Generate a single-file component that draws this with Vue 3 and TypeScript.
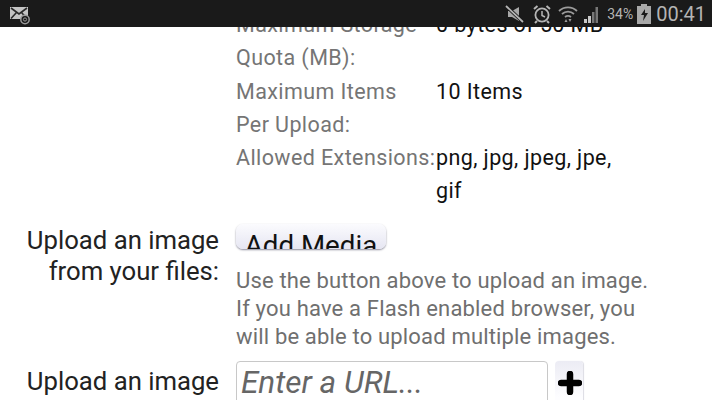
<script setup lang="ts">
const stats: { label: string[]; value: string[] }[] = [
  { label: ['Maximum Storage', 'Quota (MB):'], value: ['0 bytes of 50 MB'] },
  { label: ['Maximum Items', 'Per Upload:'], value: ['10 Items'] },
  { label: ['Allowed Extensions:'], value: ['png, jpg, jpeg, jpe,', 'gif'] },
]
const help = [
  'Use the button above to upload an image.',
  'If you have a Flash enabled browser, you',
  'will be able to upload multiple images.',
]
</script>

<template>
  <div class="screen">
    <header class="status">
      <svg class="mail" width="20" height="18" viewBox="0 0 20 18">
        <rect x="0" y="0" width="18" height="12" fill="#c4c4c4" />
        <path d="M1 1l8 6 8-6M1 11.500l5.500-6M17 11.500l-5.500-6" fill="none" stroke="#2a2a2a" stroke-width="1.6" />
        <circle cx="15" cy="12.500" r="4.200" fill="#1a1a1a" stroke="#999" stroke-width="1.500" />
        <circle cx="15" cy="12.500" r="1.600" fill="none" stroke="#999" stroke-width="1" />
      </svg>
      <div class="tray">
        <svg class="i-mute" width="20" height="18" viewBox="0 0 20 18">
          <path d="M3 6h4l7-4v14l-7-4H3z" fill="#a8a8a8" />
          <path d="M1 1l17 16" stroke="#1a1a1a" stroke-width="3.400" />
          <path d="M1 1l17 16" stroke="#b5b5b5" stroke-width="1.800" />
        </svg>
        <svg class="i-alarm" width="20" height="20" viewBox="0 0 20 20">
          <circle cx="10" cy="11" r="6.600" fill="none" stroke="#b5b5b5" stroke-width="1.800" />
          <path d="M10 7v4.500l3 1.500" fill="none" stroke="#b5b5b5" stroke-width="1.500" />
          <path d="M2 5l3.500-3M18 5l-3.500-3M5 17l-2 2M15 17l2 2" stroke="#b5b5b5" stroke-width="2" />
        </svg>
        <svg class="i-wifi" width="20" height="20" viewBox="0 0 20 20">
          <path d="M1 7a13 13 0 0 1 18 0M4 10a9 9 0 0 1 12 0M7 13a5 5 0 0 1 6 0" fill="none" stroke="#9c9c9c" stroke-width="1.800" />
          <path d="M8 15l-1.500 3h3zM12 18l1.500-3h-3z" fill="#9c9c9c" />
        </svg>
        <svg class="i-signal" width="18" height="18" viewBox="0 0 16 18">
          <path d="M1 14h3v4H1zM5 11h3v7H5z" fill="#c8c8c8" />
          <path d="M9 7h2.500v11H9zM12.500 2H15v16h-2.500z" fill="#777" />
        </svg>
        <span class="percent">34%</span>
        <svg class="i-batt" width="14" height="20" viewBox="0 0 14 20">
          <path d="M4 0h6v2h4v18H0V2h4z" fill="#a8a8a8" />
          <path d="M8 5L4 11h3l-1 6 5-8H8z" fill="#1a1a1a" />
        </svg>
        <span class="clock">00:41</span>
      </div>
    </header>

    <main class="page">
      <section class="stats">
        <template v-for="row in stats" :key="row.label[0]">
          <div class="stat-label">
            <div v-for="line in row.label" :key="line">{{ line }}</div>
          </div>
          <div class="stat-value">
            <div v-for="line in row.value" :key="line">{{ line }}</div>
          </div>
        </template>
      </section>

      <section class="field upload">
        <div class="field-label">Upload an image<br />from your files:</div>
        <div class="field-body">
          <button class="add-media" type="button"><span>Add Media</span></button>
          <p class="help">
            <span v-for="line in help" :key="line">{{ line }}<br /></span>
          </p>
        </div>
      </section>

      <section class="field url">
        <div class="field-label">Upload an image</div>
        <div class="url-body">
          <div class="url-input">Enter a URL...</div>
          <button class="plus" type="button" aria-label="Add">
            <svg width="24" height="24" viewBox="0 0 24 24">
              <path d="M12 3v18M3 12h18" stroke="#000" stroke-width="6.500" stroke-linecap="round" />
            </svg>
          </button>
        </div>
      </section>
    </main>
  </div>
</template>

<style>
html, body { margin: 0; background: #fff; }
</style>

<style scoped>
.screen {
  position: relative;
  width: 712px;
  height: 400px;
  overflow: hidden;
  background: #fff;
  font-family: Roboto, "Open Sans", sans-serif;
}
.status {
  position: absolute;
  inset: 0 0 auto 0;
  height: 27px;
  z-index: 2;
  background: #1a1a1a;
  display: flex;
  align-items: center;
  justify-content: space-between;
  padding: 0 6px 0 10px;
  box-sizing: border-box;
}
.mail { margin-top: 5px; }
.tray { display: flex; align-items: center; color: #b4b4b4; }
.i-alarm { margin-left: 7px; }
.i-wifi { margin-left: 6px; }
.i-signal { margin-left: 4px; }
.percent { font-size: 14px; margin-left: 7px; }
.i-batt { margin-left: 4px; }
.clock { font-size: 20px; margin-left: 5px; }
.page { padding-top: 8px; }
.stats {
  display: grid;
  grid-template-columns: 200px 190px;
  margin-left: 236px;
  font-size: 21.500px;
  line-height: 33.300px;
  letter-spacing: 0.4px;
}
.stat-label { color: #757575; white-space: nowrap; }
.stat-value { color: #111; }
.field { display: grid; grid-template-columns: 219px 1fr; column-gap: 17px; }
.field-label {
  color: #222;
  font-size: 25.700px;
  line-height: 31px;
  text-align: right;
  white-space: nowrap;
}
.upload { margin-top: 16px; }
.upload .field-label { padding-top: 1px; }
.add-media {
  display: block;
  width: 150px;
  height: 25px;
  margin: 0;
  padding: 0;
  border: 0;
  border-radius: 7px;
  overflow: hidden;
  background: linear-gradient(#fbfbfe, #e6e6f2);
  box-shadow: 0 1px 2px #8a8a9a;
  color: #111;
  font: 400 27.700px/1 Roboto, sans-serif;
}
.add-media span { display: block; padding-top: 8px; white-space: nowrap; }
.help {
  margin: 18px 0 0;
  color: #6f6f6f;
  font-size: 22px;
  line-height: 28px;
  letter-spacing: 0.17px;
  white-space: nowrap;
}
.url { margin-top: 10px; }
.url .field-label { padding-top: 5px; }
.url-body { display: flex; gap: 7px; }
.url-input {
  width: 312px;
  height: 60px;
  box-sizing: border-box;
  border: 1px solid #c8c8c8;
  border-radius: 4px;
  padding: 2px 4px;
  color: #666;
  font-style: italic;
  font-size: 31.500px;
  line-height: 38px;
}
.plus {
  width: 28px;
  height: 60px;
  padding: 10px 0 0 1px;
  border: 0;
  border-radius: 4px;
  background: linear-gradient(#ecECF4, #fdfdff 60%);
  box-shadow: 1px 0 1px #dcdce4;
  display: flex;
  justify-content: center;
  align-items: flex-start;
}
</style>
